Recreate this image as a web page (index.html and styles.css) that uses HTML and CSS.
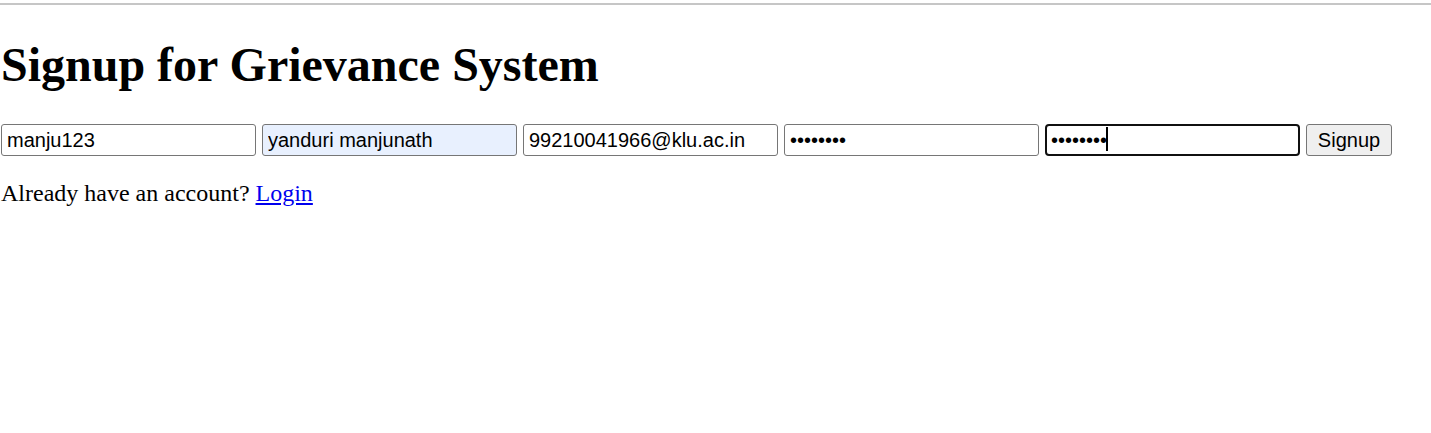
FILE: index.html
```html
<!DOCTYPE html>
<html>
<head>
<meta charset="utf-8">
<title>Signup</title>
<link rel="stylesheet" href="styles.css">
</head>
<body>
<div class="topline"></div>
<h1 class="title">Signup for Grievance System</h1>
<form class="signup">
  <input class="field" type="text" value="manju123">
  <input class="field autofill" type="text" value="yanduri manjunath">
  <input class="field" type="email" value="99210041966@klu.ac.in">
  <input class="field" type="password" value="12345678">
  <span class="focus-wrap">
    <input class="field focused" type="password" value="12345678">
    <span class="caret"></span>
  </span>
  <button class="btn" type="button">Signup</button>
</form>
<p class="login">Already have an account? <a href="#" class="login-link">Login</a></p>
</body>
</html>
```

FILE: styles.css
```css
html, body {
  margin: 0;
  padding: 0;
  background: #ffffff;
}
body {
  font-family: "Liberation Serif", "Times New Roman", serif;
  font-size: 24px;
  color: #000;
  padding-top: 3px;
}
.topline {
  height: 2px;
  background: #c6c6c6;
}
.title {
  font-family: "Liberation Serif", "Times New Roman", serif;
  font-size: 48px;
  font-weight: bold;
  line-height: 55px;
  margin: 32px 0 32px 1px;
}
.signup {
  display: flex;
  align-items: center;
  gap: 6px;
  padding-left: 1px;
  margin: 0;
}
.field {
  box-sizing: border-box;
  width: 255px;
  height: 32px;
  margin: 0;
  padding: 0 5px;
  border: 1px solid #767676;
  border-radius: 3px;
  background: #ffffff;
  font-family: "Liberation Sans", Arial, sans-serif;
  font-size: 20px;
  color: #000;
  outline: none;
}
.autofill {
  background: #e8f0fe;
}
.focus-wrap {
  position: relative;
  display: block;
  height: 32px;
}
.focused {
  border: 2px solid #101010;
  border-radius: 4px;
  padding: 0 4px;
}
.caret {
  position: absolute;
  left: 61px;
  top: 3px;
  width: 2px;
  height: 24px;
  background: #000;
}
.btn {
  box-sizing: border-box;
  width: 86px;
  height: 32px;
  margin: 0;
  padding: 0 6px;
  border: 1px solid #767676;
  border-radius: 3px;
  background: #efefef;
  font-family: "Liberation Sans", Arial, sans-serif;
  font-size: 20px;
  color: #000;
}
.login {
  margin: 24px 0 0 1px;
  line-height: 27px;
}
.login-link {
  color: #0000ee;
  text-decoration: underline;
}
```
